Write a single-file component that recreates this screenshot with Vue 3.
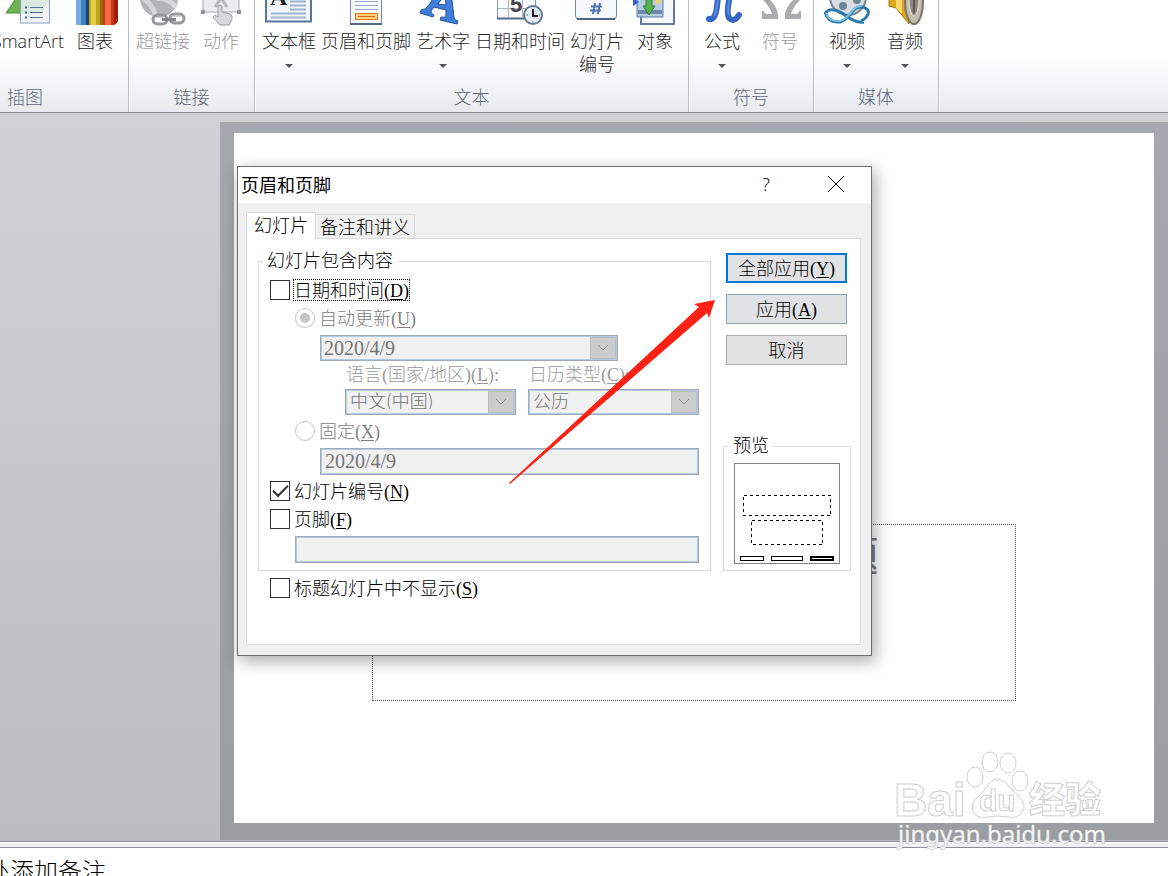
<script setup>
import { ref } from "vue";

const showDate = ref(false);
const dateMode = ref("auto");
const showNumber = ref(true);
const showFooter = ref(false);
const footerText = ref("");
const skipTitle = ref(false);

// Ribbon groups, left to right
const groups = [
  {
    name: "插图",
    cut: true,
    items: [
      { icon: "smartart", label: "SmartArt" },
      { icon: "chart", label: "图表" },
    ],
  },
  {
    name: "链接",
    items: [
      { icon: "link", label: "超链接", disabled: true },
      { icon: "action", label: "动作", disabled: true },
    ],
  },
  {
    name: "文本",
    items: [
      { icon: "textbox", label: "文本框", menu: true },
      { icon: "header", label: "页眉和页脚" },
      { icon: "wordart", label: "艺术字", menu: true },
      { icon: "date", label: "日期和时间" },
      { icon: "number", label: "幻灯片", label2: "编号" },
      { icon: "object", label: "对象" },
    ],
  },
  {
    name: "符号",
    loose: true,
    items: [
      { icon: "pi", label: "公式", menu: true },
      { icon: "omega", label: "符号", disabled: true },
    ],
  },
  {
    name: "媒体",
    loose: true,
    items: [
      { icon: "video", label: "视频", menu: true },
      { icon: "audio", label: "音频", menu: true },
    ],
  },
];
</script>

<template>
  <div class="app">
    <header class="ribbon">
      <section v-for="group in groups" :key="group.name" class="group" :class="{ cut: group.cut, loose: group.loose }">
        <div class="tools">
          <button v-for="item in group.items" :key="item.label" type="button" class="tool" :disabled="item.disabled">
            <svg class="icon" viewBox="0 0 48 27" aria-hidden="true">
              <g v-if="item.icon === 'smartart'">
                <path d="M2 13 L15 -6 H48 L37 13 Z" fill="#6fb353" stroke="#4c9038" />
                <rect x="16.5" y="-4" width="29" height="27" fill="#eef3fa" fill-opacity=".85" stroke="#8ba0bf" />
                <path d="M26 7.5h13M26 12.5h13M26 17.5h13" stroke="#50719f" />
                <path d="M21 7.5h2M21 12.5h2M21 17.5h2" stroke="#3a5f96" stroke-width="2" />
              </g>
              <g v-else-if="item.icon === 'chart'">
                <path d="M5 -2h13v27h-11q-2 0-2-2z" fill="#3f7fc0" />
                <path d="M5 -2h5v27h-3q-2 0-2-2z" fill="#75aee2" />
                <path d="M15 -2h3v27h-3z" fill="#16447c" />
                <path d="M18 -2h14v27h-14z" fill="#c3a21c" />
                <path d="M20 -2h5v27h-5z" fill="#e5cc49" />
                <path d="M29 -2h3v27h-3z" fill="#8b6d0d" />
                <path d="M32 -2h15v23q-2 4-5 4h-10z" fill="#cc3515" />
                <path d="M34 -2h6v27h-6z" fill="#f06a4a" />
                <path d="M43 -2h4v23l-4 4z" fill="#9b200c" />
              </g>
              <g v-else-if="item.icon === 'link'">
                <circle cx="20" cy="-2" r="19" fill="#b4b4b8" />
                <path d="M4 -1q8 3 13 17M17 -2q12 0 20 9" fill="none" stroke="#d6d6da" stroke-width="5" />
                <rect x="14" y="15" width="14" height="9" rx="4.5" fill="none" stroke="#97979d" stroke-width="3" />
                <rect x="31" y="14" width="14" height="9" rx="4.5" fill="none" stroke="#97979d" stroke-width="3" />
                <path d="M23 19.500h14" stroke="#85858b" stroke-width="3" />
                <path d="M17 17.500h7M35 16.500h7" stroke="#d2d2d6" />
              </g>
              <g v-else-if="item.icon === 'action'">
                <path d="M6 -2v14h36v-14z" fill="#ececf0" stroke="#a9a9af" />
                <path d="M18 7l6-9 6 9" fill="none" stroke="#b5b5ba" stroke-width="3" />
                <path d="M4 10h4v4h-4zM40 10h4v4h-4z" fill="#909096" />
                <path d="M21 17v-11q2-2 4 0v6l8 2q3 1 2 5l-3 6h-9l-7-8q1-3 5 0z" fill="#d9d9dd" stroke="#98989e" />
              </g>
              <g v-else-if="item.icon === 'textbox'">
                <rect x="1" y="-4" width="45" height="25.500" fill="#f1f5fb" stroke="#5d7697" stroke-width="2" />
                <path d="M6 13.500h35M6 17.500h35M25 1.500h16M25 5.500h16M25 9.500h16" stroke="#a0b4d0" stroke-width="2" />
                <text x="5" y="5" class="glyph-serif" font-size="24" fill="#222">A</text>
              </g>
              <g v-else-if="item.icon === 'header'">
                <path d="M8.500 -2v26.500h31v-26.500" fill="#f5f8fd" stroke="#7088ac" />
                <path d="M8 24h32" stroke="#52698c" stroke-width="2" />
                <path d="M13 1.500h23M13 5.500h23M13 9.500h23" stroke="#96a9cc" />
                <rect x="13.500" y="13.500" width="22" height="6" fill="#ffcf7b" stroke="#e08222" />
                <path d="M16 16.500h17" stroke="#e0660f" />
              </g>
              <g v-else-if="item.icon === 'wordart'">
                <path d="M2 10q5 0 8-5l9-14h13l3 27q0 2 4 3l-1 3-17-4 1-3q5 1 5-2l0-5-12-3-3 4q-1 2 3 4l-1 2-13-4z" fill="#3f7fdc" stroke="#245293" />
                <path d="M19 4l7-9 1 10z" fill="#fff" stroke="#245293" />
              </g>
              <g v-else-if="item.icon === 'date'">
                <path d="M1.500 -3v21.500h38v-21.500" fill="#f8fafc" stroke="#8496b3" />
                <path d="M1 18.500h34" stroke="#54698c" stroke-width="2" />
                <path d="M12.500 -2v19M26.500 -2v19M2 8.500h36" stroke="#b1b7c1" />
                <text x="14" y="12" class="glyph-sans" font-size="22" fill="#454545">5</text>
                <circle cx="37" cy="15" r="9" fill="#e6edf7" stroke="#65788f" stroke-width="2" />
                <path d="M37 9v7h5" fill="none" stroke="#222" stroke-width="2" />
                <path d="M30 15h2M37 21v2M43 15h1" stroke="#65788f" />
              </g>
              <g v-else-if="item.icon === 'number'">
                <path d="M2.500 -3v19q0 3 3 3h35q3 0 3-3v-19" fill="#f5f8fd" stroke="#7189b0" />
                <path d="M4 19h38" stroke="#4d6688" stroke-width="2" />
                <path d="M22 3l-2 11M27 3l-2 11M18 6.500h11M17 10.500h11" stroke="#4f74b2" stroke-width="2" />
              </g>
              <g v-else-if="item.icon === 'object'">
                <rect x="10" y="-4" width="33" height="28" fill="#f3f6fb" stroke="#627b9e" stroke-width="2" />
                <rect x="6" y="-4" width="26" height="21" fill="#b7cce7" stroke="#627b9e" />
                <path d="M7 12h24" stroke="#7089aa" stroke-width="4" />
                <path d="M2 -2l6 4-6 4z" fill="#2d61c8" />
                <path d="M15 -2v8h-3l6 9 6-9h-3v-8z" fill="#56b04c" stroke="#348036" />
                <circle cx="27" cy="1" r="3" fill="#ecd06b" />
              </g>
              <g v-else-if="item.icon === 'pi'">
                <path d="M20 -4q-1 19-5 22-3 2-4 1M32 -4q-4 17-1 22 5 5 10-3" fill="none" stroke="#3566c6" stroke-width="6" stroke-linecap="round" />
                <path d="M20 -4q-1 16-4 20M32 -4q-3 14-1 19" fill="none" stroke="#5c8be0" stroke-width="2" />
              </g>
              <g v-else-if="item.icon === 'omega'" fill="#acacb0">
                <path d="M6 11h2q0 3 3 3h5q-2-7-9-14h7q7 7 8 14v5h-16z" />
                <path d="M45 11h-2q0 3-3 3h-5q2-7 9-14h-7q-7 7-8 14v5h16z" />
              </g>
              <g v-else-if="item.icon === 'video'">
                <circle cx="25" cy="-3" r="18" fill="#d7dce2" stroke="#7c8691" stroke-width="2" />
                <circle cx="20" cy="6" r="4" fill="#6e8496" />
                <circle cx="34" cy="0" r="4" fill="#6e8496" />
                <path d="M2 12q3 11 15 10c10-2 12-16 22-15q8 2 6 7t-7 7M2 14q4-8 17-1 14 11 22 9" fill="none" stroke="#2f7ba8" stroke-width="3" />
                <path d="M3 13q3 9 14 8c10-2 12-16 22-15" fill="none" stroke="#77bde2" stroke-width="2" />
              </g>
              <g v-else-if="item.icon === 'audio'">
                <path d="M8 -3v9l7 2 13 16V-3z" fill="#dba51e" stroke="#a97813" />
                <path d="M15 -3v11l6 6V-3z" fill="#f7d767" />
                <ellipse cx="33" cy="1" rx="9" ry="23" fill="#c4beb3" stroke="#7c7568" stroke-width="2" />
                <ellipse cx="33" cy="-1" rx="5" ry="17" fill="#8e887d" stroke="#e5e1d9" />
                <path d="M33 -3v16" stroke="#5f5a50" stroke-width="2" />
              </g>
            </svg>
            <span class="tool-label">{{ item.label }}</span>
            <span v-if="item.label2" class="tool-label">{{ item.label2 }}</span>
            <span v-if="item.menu" class="caret"></span>
          </button>
        </div>
        <h2 class="group-name">{{ group.name }}</h2>
      </section>
    </header>

    <main class="workspace">
      <div class="canvas">
        <div class="slide">
          <div class="placeholder">单击此处添加副标题</div>
        </div>
      </div>
    </main>

    <div class="splitter"></div>
    <footer class="notes"><p>处添加备注</p></footer>

    <svg class="watermark" viewBox="0 0 220 110" aria-hidden="true">
      <g class="mark">
        <ellipse cx="106" cy="21" rx="8" ry="10" />
        <ellipse cx="124" cy="22" rx="8" ry="10" />
        <ellipse cx="91" cy="36" rx="8" ry="10" />
        <ellipse cx="136" cy="40" rx="8" ry="10" />
        <path d="M113 38q7 0 13 9l10 10q7 7 2 14-4 7-14 5-11-2-21 0-11 2-14-6-3-7 4-13l9-10q5-9 11-9z" />
        <text x="10" y="75" class="bai" font-size="46">Bai</text>
        <text x="95" y="70" class="du" font-size="30">du</text>
        <text x="145" y="72" class="jing" font-size="36">经验</text>
      </g>
      <text x="14" y="102" class="site" font-size="24">jingyan.baidu.com</text>
    </svg>

    <form class="dialog" role="dialog" aria-labelledby="dialog-title" @submit.prevent>
      <div class="titlebar">
        <h1 id="dialog-title">页眉和页脚</h1>
        <button type="button" class="title-btn" aria-label="帮助">?</button>
        <button type="button" class="title-btn" aria-label="关闭">
          <svg viewBox="0 0 16 16" width="16" height="16"><path d="M0 0L16 16M16 0L0 16" stroke="#111" /></svg>
        </button>
      </div>

      <div class="body">
        <div class="tabs" role="tablist">
          <button type="button" role="tab" class="tab active" aria-selected="true">幻灯片</button>
          <button type="button" role="tab" class="tab" aria-selected="false">备注和讲义</button>
        </div>

        <div class="panel">
          <fieldset class="content">
            <legend>幻灯片包含内容</legend>

            <div class="row">
              <input id="date" v-model="showDate" type="checkbox" />
              <label for="date" class="focused">日期和时间<kbd>(<u>D</u>)</kbd></label>
            </div>

            <div class="row indent off">
              <input id="auto" v-model="dateMode" type="radio" name="mode" value="auto" disabled />
              <label for="auto">自动更新<kbd>(<u>U</u>)</kbd></label>
            </div>
            <div class="combo date-combo">
              <select class="latin" aria-label="日期格式" disabled>
                <option>2020/4/9</option>
              </select>
              <span class="arrow-box"><svg viewBox="0 0 12 8" width="12" height="8"><path d="M1 1l5 5 5-5" /></svg></span>
            </div>

            <div class="pair">
              <label for="lang" class="sub-label">语言<kbd>(</kbd>国家<kbd>/</kbd>地区<kbd>)(<u>L</u>):</kbd></label>
              <label for="calendar" class="sub-label">日历类型<kbd>(<u>C</u>):</kbd></label>
              <div class="combo">
                <select id="lang" disabled>
                  <option>中文(中国)</option>
                </select>
                <span class="arrow-box"><svg viewBox="0 0 12 8" width="12" height="8"><path d="M1 1l5 5 5-5" /></svg></span>
              </div>
              <div class="combo">
                <select id="calendar" disabled>
                  <option>公历</option>
                </select>
                <span class="arrow-box"><svg viewBox="0 0 12 8" width="12" height="8"><path d="M1 1l5 5 5-5" /></svg></span>
              </div>
            </div>

            <div class="row indent off">
              <input id="fixed" v-model="dateMode" type="radio" name="mode" value="fixed" disabled />
              <label for="fixed">固定<kbd>(<u>X</u>)</kbd></label>
            </div>
            <input class="text latin fixed-text" type="text" value="2020/4/9" aria-label="固定日期" disabled />

            <div class="row">
              <input id="number" v-model="showNumber" type="checkbox" />
              <label for="number">幻灯片编号<kbd>(<u>N</u>)</kbd></label>
            </div>
            <div class="row">
              <input id="footer" v-model="showFooter" type="checkbox" />
              <label for="footer">页脚<kbd>(<u>F</u>)</kbd></label>
            </div>
            <input v-model="footerText" class="text footer-text" type="text" aria-label="页脚" disabled />
          </fieldset>

          <div class="side">
            <div class="actions">
              <button type="submit" class="btn primary">全部应用<kbd>(<u>Y</u>)</kbd></button>
              <button type="button" class="btn">应用<kbd>(<u>A</u>)</kbd></button>
              <button type="button" class="btn plain">取消</button>
            </div>
            <fieldset class="preview">
              <legend>预览</legend>
              <svg viewBox="0 0 106 101" role="img" aria-label="预览" shape-rendering="crispEdges">
                <g fill="none" stroke="#000">
                  <rect x=".5" y=".5" width="105" height="100" fill="#fff" stroke="#80828c" />
                  <rect x="9.500" y="32.500" width="87" height="20" stroke-dasharray="3 3" />
                  <rect x="17.500" y="57.500" width="71" height="24" stroke-dasharray="3 3" />
                  <rect x="6.500" y="93.500" width="23" height="4" />
                  <rect x="37.500" y="93.500" width="31" height="4" />
                  <rect x="77" y="94" width="22" height="3" stroke-width="2" />
                </g>
              </svg>
            </fieldset>
          </div>

          <div class="row title-row">
            <input id="skip" v-model="skipTitle" type="checkbox" />
            <label for="skip">标题幻灯片中不显示<kbd>(<u>S</u>)</kbd></label>
          </div>
        </div>
      </div>
    </form>

    <!-- red pointer towards the apply buttons -->
    <svg class="pointer" viewBox="0 0 206 184" aria-hidden="true">
      <path d="M0 183L190 7L185 4L206 0L200 18L198 13L1 184Z" fill="#ff2113" />
    </svg>
  </div>
</template>

<style>
body {
  margin: 0;
  overflow: hidden;
}
</style>

<style scoped>
* {
  box-sizing: border-box;
}

.app {
  position: relative;
  display: flex;
  flex-direction: column;
  height: 100vh;
  overflow: hidden;
  font-family: "Noto Sans CJK SC", sans-serif;
  font-size: 18px;
  font-weight: 300;
  color: #000;
}

button,
input,
select {
  font: inherit;
  color: inherit;
  margin: 0;
}

/* ribbon */
.ribbon {
  display: flex;
  flex: none;
  height: 113px;
  background: linear-gradient(#fff 0, #fff 50%, #e7eaee 100%);
  border-bottom: 1px solid #8a8d93;
  font-family: "Open Sans", "Noto Sans CJK SC", sans-serif;
}

.group {
  display: flex;
  flex-direction: column;
  border-right: 1px solid #b9bdc5;
  box-shadow: 1px 0 0 #fff;
}

.group.cut {
  width: 207px;
  margin-left: -78px;
}

.tools {
  display: flex;
  flex: 1;
  justify-content: flex-end;
  gap: 5px;
  padding: 0 7px;
}

.loose .tools {
  gap: 6px;
}

.tool {
  display: flex;
  flex-direction: column;
  align-items: center;
  min-width: 52px;
  padding: 0;
  border: 0;
  background: none;
  color: #262626;
  white-space: nowrap;
}

.tool:disabled {
  color: #9b9b9b;
}

.icon {
  width: 48px;
  height: 27px;
  margin-bottom: 3px;
}

.tool-label {
  line-height: 23px;
}

.caret {
  margin-top: 11px;
  border: 4px solid transparent;
  border-top-color: #555;
  border-bottom: 0;
}

.group-name {
  margin: 0 0 3px;
  font-size: 18px;
  font-weight: 300;
  line-height: 24px;
  text-align: center;
  color: #5f6878;
}

.glyph-serif {
  font-family: "Liberation Serif", serif;
  font-weight: 700;
}

.glyph-sans {
  font-family: "Liberation Sans", sans-serif;
  font-weight: 700;
}

/* slide area */
.workspace {
  display: flex;
  flex: 1;
  padding: 9px 0 1px 220px;
  background: linear-gradient(#d0d2d6, #b9bcc1);
}

.canvas {
  display: flex;
  flex: 1;
  padding: 11px 14px 17px;
  background: linear-gradient(#a5a8ae, #9a9ea2);
}

.slide {
  position: relative;
  flex: 1;
  background: #fff;
}

.placeholder {
  position: absolute;
  left: 15%;
  right: 15%;
  top: 391px;
  height: 177px;
  border: 1px dotted #555;
  font-size: 41px;
  font-weight: 400;
  line-height: 56px;
  text-align: center;
  color: #777;
}

.splitter {
  flex: none;
  height: 7px;
  background: #f0f1f3;
  border-top: 1px solid #8b8e95;
  border-bottom: 1px solid #8b8e95;
  box-shadow: inset 0 1px 0 #fff;
}

.notes {
  flex: none;
  height: 28px;
  overflow: hidden;
  background: #fff;
}

.notes p {
  margin: 4px 0 0 -14px;
  font-size: 24px;
  line-height: 36px;
}

.watermark {
  position: absolute;
  left: 884px;
  top: 741px;
  width: 220px;
  height: 110px;
  overflow: visible;
}

.mark {
  fill: #fff;
  stroke: #d0d0d0;
  stroke-width: 1;
}

.bai,
.du {
  font-family: "Liberation Sans", sans-serif;
  font-weight: 700;
}

.jing {
  font-weight: 900;
}

.site {
  font-family: "Noto Sans", sans-serif;
  font-weight: 400;
  fill: #f3f3f3;
  stroke: #b9bbbd;
  stroke-width: 1;
  paint-order: stroke;
}

/* dialog */
.dialog {
  position: absolute;
  left: 237px;
  top: 166px;
  width: 635px;
  background: #f0f0f0;
  border: 1px solid #6d6e70;
  box-shadow: 3px 5px 16px rgba(0, 0, 0, 0.35);
}

.titlebar {
  display: flex;
  align-items: center;
  height: 36px;
  background: #fff;
}

.titlebar h1 {
  flex: 1;
  margin: 0;
  padding: 0 0 3px 3px;
  font-size: 18px;
  font-weight: 400;
}

.title-btn {
  display: flex;
  align-items: center;
  justify-content: center;
  width: 70px;
  height: 36px;
  padding: 0 0 2px;
  border: 0;
  background: none;
  font-family: "Open Sans", sans-serif;
}

.body {
  padding: 9px 10px 10px 8px;
}

.tabs {
  display: flex;
  align-items: flex-end;
  height: 27px;
  margin-bottom: -1px;
}

.tab {
  height: 25px;
  padding: 0 4px 2px;
  border: 1px solid #dcdcdc;
  border-left: 0;
  background: #f0f0f0;
  line-height: 20px;
}

.tab.active {
  position: relative;
  height: 27px;
  padding: 0 7px 4px;
  border-left: 1px solid #dcdcdc;
  border-bottom: 0;
  background: #fff;
}

.panel {
  display: grid;
  grid-template-columns: 1fr 128px;
  column-gap: 12px;
  padding: 13px 9px 42px 11px;
  background: #fff;
  border: 1px solid #dcdcdc;
}

fieldset {
  min-width: 0;
  margin: 0;
  border: 1px solid #dcdcdc;
}

legend {
  margin-left: -7px;
  padding: 0 4px 4px;
  line-height: 14px;
}

.content {
  display: flex;
  flex-direction: column;
  padding: 6px 11px 7px;
}

kbd {
  font-family: "Liberation Serif", serif;
  font-size: 18px;
  font-weight: 400;
  line-height: 0;
}

u {
  text-underline-offset: 2px;
}

.row {
  display: flex;
  align-items: center;
  gap: 4px;
  height: 28px;
}

.row label {
  padding-bottom: 2px;
  line-height: 18px;
  white-space: nowrap;
}

.focused {
  outline: 1px dotted #000;
}

.indent {
  margin-left: 25px;
}

.off {
  color: #808080;
}

input[type="checkbox"],
input[type="radio"] {
  appearance: none;
  flex: none;
  display: grid;
  place-items: center;
  width: 20px;
  height: 20px;
  border: 1px solid #333;
  background: #fff;
}

input[type="checkbox"]:checked::before {
  content: "";
  width: 13px;
  height: 6px;
  margin-bottom: 4px;
  border: solid #333;
  border-width: 0 0 2px 2px;
  transform: rotate(-45deg);
}

input[type="radio"] {
  border-color: #c6c6c6;
  border-radius: 50%;
}

input[type="radio"]:checked::before {
  content: "";
  width: 10px;
  height: 10px;
  border-radius: 50%;
  background: #c6c6c6;
}

.combo {
  display: flex;
  height: 26px;
  border: 1px solid #a2a9b4;
  background: #f0f0f0;
  box-shadow: inset 0 0 0 1px #b0cbea;
  padding: 1px;
}

.combo select {
  appearance: none;
  flex: 1;
  min-width: 0;
  padding: 0 3px 4px;
  border: 0;
  background: none;
  line-height: 18px;
  opacity: 1;
  color: #747474;
}

.arrow-box {
  display: flex;
  align-items: center;
  justify-content: center;
  width: 26px;
  background: #ccc;
  border: 1px solid #bfbfbf;
}

.arrow-box path {
  fill: none;
  stroke: #909090;
  stroke-width: 1;
}

.date-combo {
  margin: 3px 81px 0 50px;
}

.combo .latin,
.text.latin {
  font-family: "Liberation Serif", serif;
  font-size: 20px;
  font-weight: 400;
}

.combo .latin {
  padding: 0 2px;
}

.pair {
  display: grid;
  grid-template-columns: repeat(2, minmax(0, 1fr));
  column-gap: 12px;
  margin: 0 0 2px 75px;
}

.sub-label {
  height: 28px;
  padding-left: 1px;
  line-height: 25px;
  white-space: nowrap;
  color: #9a9a9a;
}

.text {
  height: 27px;
  padding: 0 4px;
  border: 1px solid #a2a9b4;
  background: #f0f0f0;
  box-shadow: inset 0 0 0 1px #b0cbea;
  color: #747474;
}

.fixed-text {
  margin: 3px 0 2px 50px;
}

.footer-text {
  margin: 3px 0 0 25px;
}

.side {
  display: flex;
  flex-direction: column;
  justify-content: space-between;
  padding-top: 1px;
}

.actions {
  display: flex;
  flex-direction: column;
  gap: 11px;
  padding: 0 4px 0 3px;
}

.btn {
  height: 30px;
  padding: 0 0 3px;
  border: 1px solid #8fa1b3;
  background: #e1e2e4;
  line-height: 22px;
}

.btn.primary {
  border: 2px solid #0078d7;
}

.btn.plain {
  border-color: #adadad;
  background: #e1e1e1;
}

.preview {
  padding: 8px 10px 6px;
}

.preview legend {
  margin-left: -5px;
}

.preview svg {
  display: block;
  width: 100%;
}

.title-row {
  grid-column: 1 / -1;
  margin: 3px 0 0 12px;
}

.pointer {
  position: absolute;
  left: 509px;
  top: 300px;
  width: 206px;
  height: 184px;
  pointer-events: none;
}
</style>
